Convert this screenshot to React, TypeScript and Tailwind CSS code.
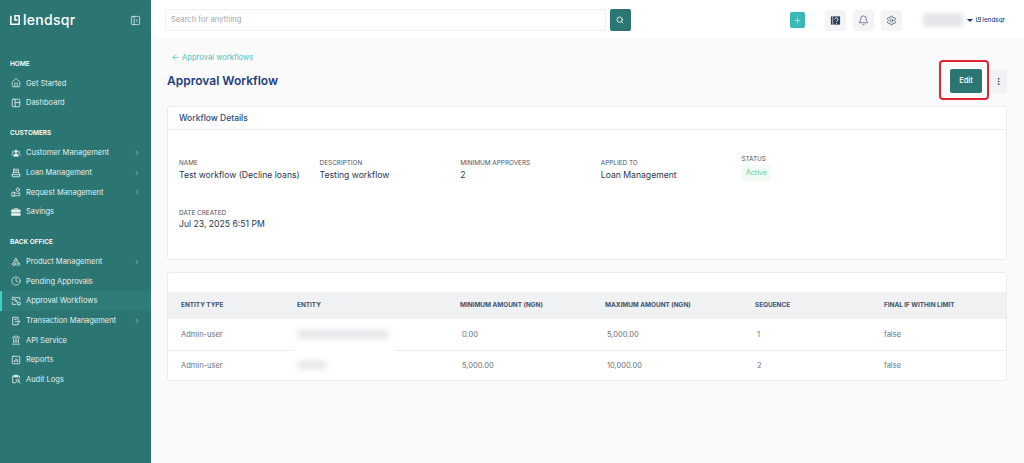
import { ArrowLeft, Search, Plus, Bell, Settings, ChevronRight, House, Clock, Landmark, EllipsisVertical, PanelLeftClose } from "lucide-react"
import type { ComponentType, ReactNode } from "react"

type IconProps = { className?: string; strokeWidth?: number }
type NavItem = { label: string; icon: ComponentType<IconProps>; arrow?: boolean; active?: boolean }

const glyph = (body: ReactNode) =>
	function Glyph({ className }: IconProps) {
		return (
			<svg viewBox="0 0 24 24" className={className} fill="none" stroke="currentColor" strokeWidth="2" strokeLinecap="round" strokeLinejoin="round">
				{body}
			</svg>
		)
	}

const DashboardIcon = glyph(<><rect x="3" y="3" width="18" height="18" rx="2" /><path d="M10 3v18M10 11h11" /></>)
const PeopleIcon = glyph(
	<>
		<circle cx="12" cy="8" r="3" fill="currentColor" />
		<path d="M6.5 19c0-3 2.500-5 5.500-5s5.500 2 5.500 5z" fill="currentColor" />
		<path d="M5 7.500a2 2 0 0 0 0 4M19 7.500a2 2 0 0 1 0 4M2 17c0-2 1-3 2.500-3.500M22 17c0-2-1-3-2.500-3.500" />
	</>,
)
const LoanIcon = glyph(<><rect x="6" y="3" width="12" height="8" rx="1" /><path d="M6 11l-3 4v6h18v-6l-3-4M3 16h18M9 7h6" /></>)
const RequestIcon = glyph(
	<>
		<circle cx="16.500" cy="6.500" r="4" />
		<path d="M2 21v-8l6-1v9zM8 14l5 1h3l5-1v7H8" />
	</>,
)
const BriefcaseIcon = glyph(
	<>
		<path d="M8 6V4h8v2" />
		<path d="M2 7h20v5H2z" fill="currentColor" />
		<path d="M2 15h20v5H2z" fill="currentColor" />
	</>,
)
const ProductIcon = glyph(<><path d="M12 3l4 7H8z" /><circle cx="7" cy="17" r="3.500" /><rect x="14" y="13.500" width="7" height="7" rx="3.500" /></>)
const WorkflowIcon = glyph(
	<>
		<path d="M9 3H3v6h6zM21 15h-6v6h6z" />
		<path d="M13 4h8v7M11 20H3v-7" strokeDasharray="3 2" />
		<circle cx="12" cy="12" r="1.500" />
	</>,
)
const TransactionIcon = glyph(<><path d="M17 9V3H4v18h13v-3" /><path d="M10 13.500h11M18 10.500l3 3-3 3M8 8h5" /></>)
const ReportIcon = glyph(<><rect x="3" y="3" width="18" height="18" rx="2" /><path d="M8 16v-3M12 16V8M16 16v-5" /></>)
const AuditIcon = glyph(
	<>
		<path d="M8 5H4v16h7M16 5h4v5" />
		<path d="M8 3h8v4H8z" fill="currentColor" />
		<circle cx="16" cy="16" r="3.500" />
		<path d="M19 19l3 3" />
	</>,
)

const sections: { title: string; items: NavItem[] }[] = [
	{
		title: "HOME",
		items: [
			{ label: "Get Started", icon: House },
			{ label: "Dashboard", icon: DashboardIcon },
		],
	},
	{
		title: "CUSTOMERS",
		items: [
			{ label: "Customer Management", icon: PeopleIcon, arrow: true },
			{ label: "Loan Management", icon: LoanIcon, arrow: true },
			{ label: "Request Management", icon: RequestIcon, arrow: true },
			{ label: "Savings", icon: BriefcaseIcon },
		],
	},
	{
		title: "BACK OFFICE",
		items: [
			{ label: "Product Management", icon: ProductIcon, arrow: true },
			{ label: "Pending Approvals", icon: Clock },
			{ label: "Approval Workflows", icon: WorkflowIcon, active: true },
			{ label: "Transaction Management", icon: TransactionIcon, arrow: true },
			{ label: "API Service", icon: Landmark },
			{ label: "Reports", icon: ReportIcon },
			{ label: "Audit Logs", icon: AuditIcon },
		],
	},
]

const details = [
	{ label: "NAME", value: "Test workflow (Decline loans)" },
	{ label: "DESCRIPTION", value: "Testing workflow" },
	{ label: "MINIMUM APPROVERS", value: "2" },
	{ label: "APPLIED TO", value: "Loan Management" },
]

const rows = [
	{ blur: "w-[92px] h-[9px]", min: "0.00", max: "5,000.00", seq: "1" },
	{ blur: "w-[30px] h-[8px]", min: "5,000.00", max: "10,000.00", seq: "2" },
]

function LogoMark({ className }: { className?: string }) {
	return (
		<svg viewBox="0 0 12 12" className={className} fill="none" stroke="currentColor" strokeWidth="1.8">
			<path d="M1 1v10h10V1H6v5h3" />
		</svg>
	)
}

function Sidebar() {
	return (
		<aside className="flex w-[151px] shrink-0 flex-col bg-[#2b7673] text-[#e3efee]">
			<div className="flex h-[40px] items-center justify-between px-[10px]">
				<div className="flex items-center gap-[3px] text-white">
					<LogoMark className="h-[10px] w-[10px]" />
					<span className="text-[14px] leading-none font-medium tracking-[0.3px]">lendsqr</span>
				</div>
				<PanelLeftClose className="h-[11px] w-[11px]" strokeWidth={1.7} />
			</div>
			<nav className="flex flex-col pt-[18.500px]">
				{sections.map((s) => (
					<div key={s.title} className="mb-[15.500px] flex flex-col">
						<h3 className="mb-[5px] pl-[10px] text-[6.500px] leading-[10px] font-semibold text-white">{s.title}</h3>
						{s.items.map((item) => {
							const Icon = item.icon
							return (
								<div key={item.label} className={`flex h-[19.600px] items-center pr-[10px] ${item.active ? "border-l-2 border-[#3ecfc8] bg-[#307c79] pl-[9px]" : "pl-[11px]"}`}>
									<Icon className="mr-[5px] h-[10px] w-[10px] shrink-0" strokeWidth={1.8} />
									<span className="flex-1 text-[7.500px] whitespace-nowrap">{item.label}</span>
									{item.arrow && <ChevronRight className="h-[8px] w-[8px] text-[#9cc4c2]" strokeWidth={2} />}
								</div>
							)
						})}
					</div>
				))}
			</nav>
		</aside>
	)
}

function Topbar() {
	return (
		<header className="flex h-[38px] shrink-0 items-center bg-white pl-[14px] pr-[19px] pt-[2px]">
			<div className="flex h-[22px] w-[442px] items-center rounded-[2px] border border-[#f0f0f2] px-[5px] text-[7.600px] text-[#a3a6ad]">Search for anything</div>
			<button className="ml-[4px] flex h-[22px] w-[21px] items-center justify-center rounded-[2px] bg-[#2b7673] text-white">
				<Search className="h-[8px] w-[8px]" strokeWidth={2.5} />
			</button>
			<div className="ml-[159px] flex h-[16px] w-[16px] items-center justify-center rounded-[2px] bg-[#3ab8b5] text-[#d4f1f0]">
				<Plus className="h-[9px] w-[9px]" strokeWidth={1.8} />
			</div>
			<div className="ml-[20px] flex gap-[7px]">
				<div className="flex h-[21px] w-[21px] items-center justify-center rounded-[3px] bg-[#f3f4f6] text-[#2f3e56]">
					<svg viewBox="0 0 24 24" className="h-[11px] w-[11px]">
						<path d="M2 3h20v18H2z" fill="currentColor" />
						<path d="M6 3v18" stroke="#f3f4f6" strokeWidth="1.500" />
						<path d="M10.500 9.500a3.500 3.500 0 1 1 5 3.200c-1 .5-1.500 1-1.500 2.300" fill="none" stroke="#f3f4f6" strokeWidth="2" />
						<circle cx="14" cy="18" r="1.200" fill="#f3f4f6" />
					</svg>
				</div>
				<div className="flex h-[21px] w-[21px] items-center justify-center rounded-[3px] bg-[#f3f4f6] text-[#3d4a5c]">
					<Bell className="h-[11px] w-[11px]" strokeWidth={1.5} />
				</div>
				<div className="flex h-[21px] w-[21px] items-center justify-center rounded-[3px] bg-[#f3f4f6] text-[#3d4a5c]">
					<Settings className="h-[11px] w-[11px]" strokeWidth={1.5} />
				</div>
			</div>
			<div className="ml-[21px] h-[14px] w-[40px] rounded-[2px] bg-[#e6e6ea] blur-[2px]" />
			<div className="ml-[4px] h-0 w-0 border-x-[3px] border-t-[3px] border-x-transparent border-t-[#1f3a70]" />
			<div className="ml-[3px] flex items-center gap-[1px] text-[#2a4a8a]">
				<LogoMark className="h-[5px] w-[5px]" />
				<span className="text-[6.300px] leading-none font-medium">lendsqr</span>
			</div>
		</header>
	)
}

function DetailsCard() {
	return (
		<section className="h-[154px] rounded-[3px] border border-[#ececee] bg-white">
			<div className="flex h-[23px] items-center border-b border-[#ececee] pl-[11px] text-[8.500px] font-medium text-[#2c4a7e]">Workflow Details</div>
			<div className="grid grid-cols-[repeat(5,140.600px)] pl-[11px] pt-[28px]">
				{details.map((d) => (
					<div key={d.label}>
						<div className="text-[6.400px] leading-[10px] text-[#4a5468]">{d.label}</div>
						<div className="mt-[1px] text-[8.650px] leading-[12px] text-[#2a3750]">{d.value}</div>
					</div>
				))}
				<div className="-mt-[4px]">
					<div className="text-[6.400px] leading-[10px] text-[#4a5468]">STATUS</div>
					<div className="mt-[1px] flex h-[16px] w-[30px] items-center justify-center rounded-[2px] bg-[#f3fbf5] text-[7px] text-[#5fd083]">Active</div>
				</div>
				<div className="col-span-5 pt-[27px]">
					<div className="text-[6.400px] leading-[10px] text-[#4a5468]">DATE CREATED</div>
					<div className="text-[8.650px] leading-[12px] text-[#2a3750]">Jul 23, 2025 6:51 PM</div>
				</div>
			</div>
		</section>
	)
}

function EntityTable() {
	return (
		<section className="mt-[12px] rounded-[3px] border border-[#ececee] bg-white pt-[19px]">
			<table className="w-full table-fixed border-collapse">
				<colgroup>
					<col className="w-[129px]" />
					<col className="w-[163px]" />
					<col className="w-[145px]" />
					<col className="w-[150px]" />
					<col className="w-[129px]" />
					<col />
				</colgroup>
				<thead>
					<tr className="h-[27px] bg-[#f0f1f3] text-left text-[6.400px] font-bold text-[#44506a]">
						<th className="pl-[13px] font-bold">ENTITY TYPE</th>
						<th className="font-bold">ENTITY</th>
						<th className="font-bold">MINIMUM AMOUNT (NGN)</th>
						<th className="font-bold">MAXIMUM AMOUNT (NGN)</th>
						<th className="font-bold">SEQUENCE</th>
						<th className="font-bold">FINAL IF WITHIN LIMIT</th>
					</tr>
				</thead>
				<tbody className="text-[7.500px] text-[#6b7280]">
					{rows.map((r) => (
						<tr key={r.seq} className="h-[31px] border-b border-[#eeeeef] last:h-[30px] last:border-b-0">
							<td className="pl-[13px]">Admin-user</td>
							<td className="relative">
								<div className={`rounded-full bg-[#e4e5e8] blur-[3px] ${r.blur}`} />
								{r.seq === "1" && <div className="absolute -bottom-[2px] -left-[2px] h-[4px] w-[100px] bg-white" />}
							</td>
							<td className="pl-[2px]">{r.min}</td>
							<td className="pl-[2px]">{r.max}</td>
							<td className="pl-[2px]">{r.seq}</td>
							<td>false</td>
						</tr>
					))}
				</tbody>
			</table>
		</section>
	)
}

export default function App() {
	return (
		<div className="flex h-[463px] w-[1024px] overflow-hidden bg-[#fafafa] [font-family:Inter,sans-serif]">
			<Sidebar />
			<div className="flex min-w-0 flex-1 flex-col">
				<Topbar />
				<main className="pl-[16px] pr-[17px]">
					<div className="flex h-[38px] items-center gap-[2px] pl-[4px] pt-[1px] text-[7.600px] text-[#4fc3bf]">
						<ArrowLeft className="h-[9px] w-[9px]" strokeWidth={2} />
						<span>Approval workflows</span>
					</div>
					<div className="flex h-[30px] items-start justify-between">
						<h1 className="-mt-[4px] text-[12px] leading-[18px] font-semibold text-[#213f7d]">Approval Workflow</h1>
						<div className="flex gap-[8px]">
							<div className="relative">
								<button className="-mt-[7px] block h-[24px] w-[32px] rounded-[2px] bg-[#2b7673] text-[7.500px] font-medium text-white">Edit</button>
								<div className="absolute -left-[11px] -right-[7px] -top-[16px] h-[40px] rounded-[4px] border-2 border-[#e0252f]" />
							</div>
							<div className="-mt-[7px] flex h-[24px] w-[17px] items-center justify-center rounded-[2px] bg-[#f1f2f4] text-[#3d4a5c]">
								<EllipsisVertical className="h-[9px] w-[9px]" strokeWidth={2.5} />
							</div>
						</div>
					</div>
					<DetailsCard />
					<EntityTable />
				</main>
			</div>
		</div>
	)
}
